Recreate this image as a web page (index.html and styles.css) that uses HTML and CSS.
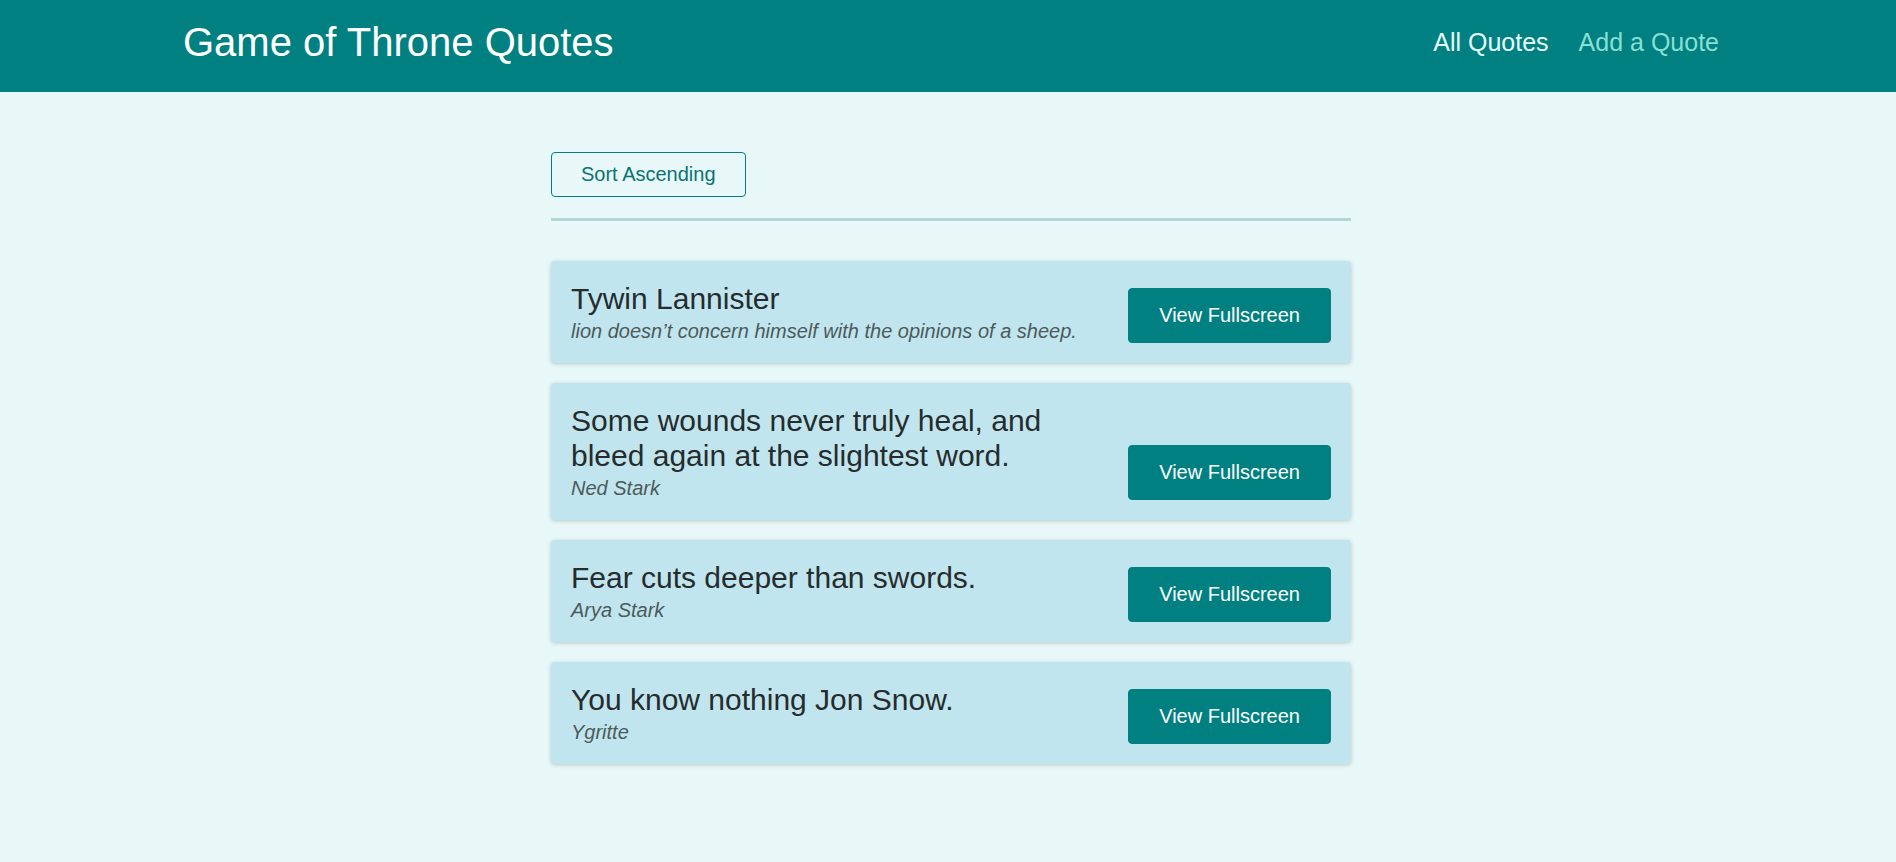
FILE: index.html
```html
<!DOCTYPE html>
<html lang="en">
<head>
<meta charset="utf-8">
<title>Game of Throne Quotes</title>
<link rel="stylesheet" href="styles.css">
</head>
<body>
<header class="header">
  <div class="logo">Game of Throne Quotes</div>
  <nav class="nav">
    <ul>
      <li><a href="#" class="active">All Quotes</a></li>
      <li><a href="#">Add a Quote</a></li>
    </ul>
  </nav>
</header>
<main class="main">
  <div class="sorting">
    <button class="btn-flat">Sort Ascending</button>
  </div>
  <ul class="list">
    <li class="item">
      <figure>
        <blockquote><p>Tywin Lannister</p></blockquote>
        <figcaption>lion doesn’t concern himself with the opinions of a sheep.</figcaption>
      </figure>
      <a href="#" class="btn">View Fullscreen</a>
    </li>
    <li class="item">
      <figure>
        <blockquote><p>Some wounds never truly heal, and bleed again at the slightest word.</p></blockquote>
        <figcaption>Ned Stark</figcaption>
      </figure>
      <a href="#" class="btn">View Fullscreen</a>
    </li>
    <li class="item">
      <figure>
        <blockquote><p>Fear cuts deeper than swords.</p></blockquote>
        <figcaption>Arya Stark</figcaption>
      </figure>
      <a href="#" class="btn">View Fullscreen</a>
    </li>
    <li class="item">
      <figure>
        <blockquote><p>You know nothing Jon Snow.</p></blockquote>
        <figcaption>Ygritte</figcaption>
      </figure>
      <a href="#" class="btn">View Fullscreen</a>
    </li>
  </ul>
</main>
</body>
</html>
```
FILE: styles.css
```css
* { box-sizing: border-box; }

body {
  margin: 0;
  font-family: "Liberation Sans", Arial, sans-serif;
  background-color: #e8f8f8;
}

.header {
  height: 92px;
  padding: 0 177px 8px 183px;
  display: flex;
  justify-content: space-between;
  align-items: center;
  background-color: #008080;
}

.logo {
  font-size: 40px;
  color: #ffffff;
}

.nav ul {
  display: flex;
  list-style: none;
  margin: 0;
  padding: 0;
}

.nav li {
  margin-left: 30px;
}

.nav a {
  font-size: 25px;
  color: #88dfd3;
  text-decoration: none;
}

.nav a.active {
  color: #e6fcfc;
}

.main {
  width: 800px;
  margin: 60px 0 40px 551px;
}

.sorting {
  padding-bottom: 21px;
  border-bottom: 3px solid #b3d6d6;
}

.btn-flat {
  font: inherit;
  font-size: 20px;
  padding: 10px 29px;
  border: 1px solid #008080;
  border-radius: 4px;
  background: transparent;
  color: #0a7373;
  cursor: pointer;
}

.list {
  list-style: none;
  margin: 0;
  padding: 40px 0 0;
  display: flex;
  flex-direction: column;
  gap: 20px;
}

.item {
  display: flex;
  justify-content: space-between;
  align-items: flex-end;
  gap: 30px;
  padding: 20px;
  border-radius: 4px;
  background-color: #c1e5ef;
  box-shadow: 0 1px 4px rgba(0, 0, 0, 0.2);
}

.item figure {
  margin: 0;
  padding: 0;
}

.item blockquote {
  margin: 0;
}

.item blockquote p {
  margin: 0;
  font-size: 30px;
  line-height: 35px;
  color: #262c2c;
}

.item figcaption {
  margin-top: 4px;
  font-size: 20px;
  line-height: 23px;
  font-style: italic;
  color: #4c5a5a;
}

.btn {
  flex-shrink: 0;
  display: inline-block;
  font-size: 20px;
  line-height: 23px;
  padding: 15px 30px;
  border: 1px solid #008080;
  border-radius: 4px;
  background-color: #008080;
  color: #ffffff;
  text-decoration: none;
}
```
